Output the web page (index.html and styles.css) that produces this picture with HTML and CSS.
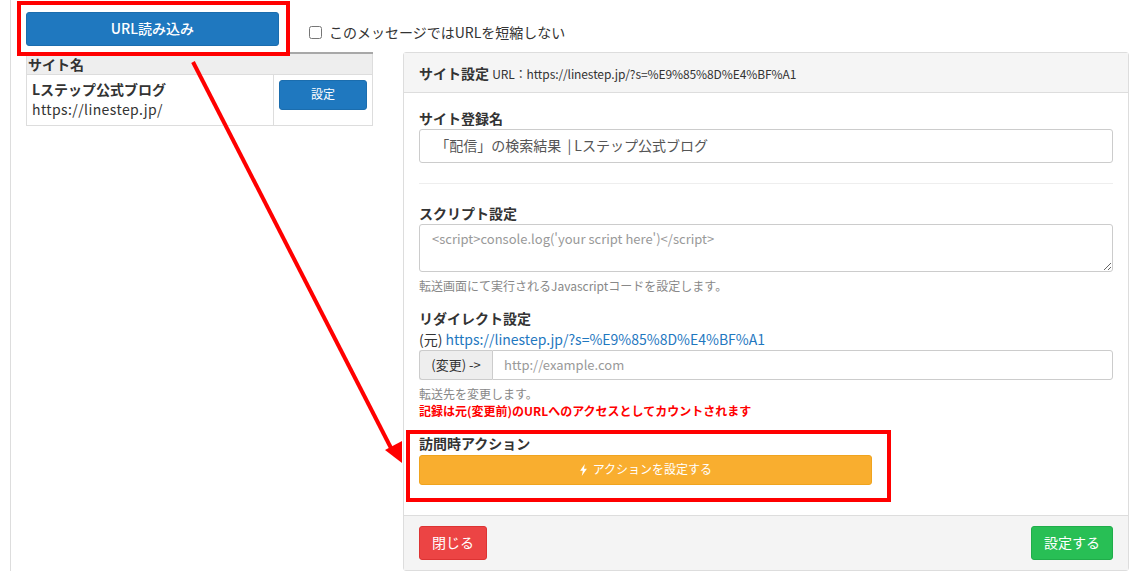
FILE: index.html
```html
<!DOCTYPE html>
<html lang="ja">
<head>
    <meta charset="UTF-8">
    <title>サイト設定</title>
    <link rel="stylesheet" href="styles.css">
</head>
<body>
    <main class="page">
        <div class="toolbar">
            <button class="btn btn-blue btn-load">URL読み込み</button>
            <label class="shorten"><input type="checkbox"> このメッセージではURLを短縮しない</label>
        </div>
        <div class="columns">
            <table class="sites">
                <tr>
                    <th colspan="2">サイト名</th>
                </tr>
                <tr>
                    <td class="site-info"><strong>Lステップ公式ブログ</strong><br><span class="site-url">https://linestep.jp/</span></td>
                    <td class="site-action"><button class="btn btn-blue btn-small">設定</button></td>
                </tr>
            </table>
            <section class="panel">
                <div class="panel-head"><strong>サイト設定</strong> <span>URL：https://linestep.jp/?s=%E9%85%8D%E4%BF%A1</span></div>
                <div class="panel-body">
                    <div class="label">サイト登録名</div>
                    <input class="field field-name" type="text" value=" 「配信」の検索結果  | Lステップ公式ブログ">
                    <hr>
                    <div class="label">スクリプト設定</div>
                    <textarea class="field field-script" placeholder="<script>console.log('your script here')</script>"></textarea>
                    <p class="help">転送画面にて実行されるJavascriptコードを設定します。</p>
                    <div class="label label-redirect">リダイレクト設定</div>
                    <div class="origin">(元) <a href="#">https://linestep.jp/?s=%E9%85%8D%E4%BF%A1</a></div>
                    <div class="input-group">
                        <span class="addon">(変更) -&gt;</span>
                        <input class="field field-url" type="text" placeholder="http://example.com">
                    </div>
                    <p class="help help-redirect">転送先を変更します。</p>
                    <p class="warning">記録は元(変更前)のURLへのアクセスとしてカウントされます</p>
                    <div class="label label-action">訪問時アクション</div>
                    <button class="btn btn-orange">
                        <svg class="bolt" viewBox="0 0 10 14" width="9" height="12"><path d="M6.5 0 1 8h3.2L3 14l6-8.4H5.6z" fill="#fff"/></svg>
                        アクションを設定する
                    </button>
                </div>
                <div class="panel-foot">
                    <button class="btn btn-red">閉じる</button>
                    <button class="btn btn-green">設定する</button>
                </div>
            </section>
        </div>
    </main>

    <!-- annotations drawn over the screenshot -->
    <div class="mark mark-load"></div>
    <div class="mark mark-action"></div>
    <svg class="arrow" width="1135" height="571" viewBox="0 0 1135 571">
        <line x1="193" y1="62" x2="391" y2="448" stroke="#f00" stroke-width="4"/>
        <polygon points="402,463 385,450 402,441" fill="#f00"/>
    </svg>
</body>
</html>
```

FILE: styles.css
```css
html, body {
    margin: 0;
    height: 571px;
    overflow: hidden;
    background: #fff;
}
body {
    font-family: "Noto Sans CJK JP", "Noto Sans", sans-serif;
    font-size: 14px;
    line-height: 20px;
    color: #333;
    position: relative;
}
.page {
    margin-left: 10px;
    padding: 12px 6px 0 15px;
    border-left: 1px solid #ddd;
    height: 571px;
    box-sizing: border-box;
}
.toolbar {
    display: flex;
    align-items: flex-start;
    height: 40px;
}
.shorten {
    display: flex;
    align-items: center;
    margin: 10px 0 0 30px;
    gap: 7px;
}
.shorten input {
    width: 13px;
    height: 13px;
    margin: 0;
}
.btn {
    border: 1px solid transparent;
    border-radius: 3px;
    color: #fff;
    font-family: inherit;
    font-size: 12px;
    padding: 0 0 2px;
}
.btn-blue {
    background: #1f78bf;
    border-color: #1b6dae;
}
.btn-load {
    width: 253px;
    height: 34px;
    font-size: 14px;
    font-weight: 500;
}
.btn-small {
    width: 88px;
    height: 30px;
    padding-bottom: 3px;
}
.columns {
    display: flex;
    gap: 30px;
    align-items: flex-start;
}
.sites {
    width: 347px;
    border-collapse: collapse;
    border-top: 2px solid #a8a8a8;
}
.sites th {
    background: #eee;
    text-align: left;
    font-size: 14px;
    font-weight: 700;
    line-height: 20px;
    padding: 0 1px;
    border: 1px solid #ddd;
    border-top: 0;
}
.sites td {
    border: 1px solid #ddd;
    vertical-align: top;
}
.site-info {
    padding: 4px 5px 6px;
    height: 40px;
}
.site-url {
    letter-spacing: 0.4px;
}
.site-action {
    width: 99px;
    padding: 5px;
    box-sizing: border-box;
}
.site-action .btn {
    display: block;
    margin-left: 0;
}
.panel {
    width: 726px;
    height: 519px;
    box-sizing: border-box;
    border: 1px solid #ddd;
    border-radius: 3px;
    display: flex;
    flex-direction: column;
}
.panel-head {
    height: 40px;
    box-sizing: border-box;
    padding: 10px 15px;
    background: #f5f5f5;
    border-bottom: 1px solid #ddd;
}
.panel-head span {
    font-size: 12px;
    letter-spacing: -0.1px;
}
.panel-body {
    flex: 1;
    padding: 15px 15px 0;
}
.label {
    font-weight: 700;
    line-height: 20px;
}
.field {
    display: block;
    box-sizing: border-box;
    border: 1px solid #ccc;
    border-radius: 3px;
    font-family: inherit;
    font-size: 14px;
    color: #555;
    background: #fff;
}
.field::placeholder {
    color: #999;
}
.field-name {
    width: 694px;
    height: 34px;
    margin-top: 1px;
    padding: 0 12px 3px;
}
hr {
    border: 0;
    border-top: 1px solid #eee;
    margin: 20px 0 19px;
}
.field-script {
    width: 694px;
    height: 48px;
    margin-top: 1px;
    padding: 4px 12px;
    font-size: 13px;
    line-height: 20px;
}
.help {
    margin: 5px 0 0;
    font-size: 12px;
    line-height: 18px;
    color: #888;
}
.label-redirect {
    margin-top: 13px;
}
.origin {
    line-height: 20px;
    margin-top: 1px;
}
.origin a {
    color: #1f78bf;
    text-decoration: none;
}
.input-group {
    display: flex;
    width: 694px;
    height: 30px;
    margin-top: 1px;
}
.addon {
    width: 73px;
    box-sizing: border-box;
    padding-top: 4px;
    text-align: center;
    font-size: 13px;
    background: #eee;
    border: 1px solid #ccc;
    border-right: 0;
    border-radius: 3px 0 0 3px;
}
.field-url {
    flex: 1;
    padding: 0 11px 2px;
    font-size: 13px;
    border-radius: 0 3px 3px 0;
}
.help-redirect {
    margin-top: 5px;
}
.warning {
    margin: 0;
    font-size: 12px;
    font-weight: 700;
    line-height: 16px;
    color: #f00;
}
.label-action {
    margin-top: 14px;
    margin-bottom: 2px;
}
.btn-orange {
    display: block;
    width: 453px;
    height: 30px;
    padding-bottom: 3px;
    background: #f9ae2f;
    border-color: #f0a41e;
}
.bolt {
    vertical-align: -2px;
    margin-right: 2px;
}
.panel-foot {
    height: 55px;
    box-sizing: border-box;
    padding: 10px 15px;
    display: flex;
    justify-content: space-between;
    background: #f4f4f4;
    border-top: 1px solid #ddd;
}
.panel-foot .btn {
    height: 34px;
    font-size: 14px;
}
.btn-red {
    width: 68px;
    background: #ec4444;
    border-color: #dd3333;
}
.btn-green {
    width: 82px;
    background: #28bf55;
    border-color: #20ad4a;
}
.mark {
    position: absolute;
    box-sizing: border-box;
    border: 4px solid #f00;
}
.mark-load {
    left: 17px;
    top: 1px;
    width: 273px;
    height: 55px;
}
.mark-action {
    left: 406px;
    top: 430px;
    width: 485px;
    height: 72px;
}
.arrow {
    position: absolute;
    left: 0;
    top: 0;
    pointer-events: none;
}
```
